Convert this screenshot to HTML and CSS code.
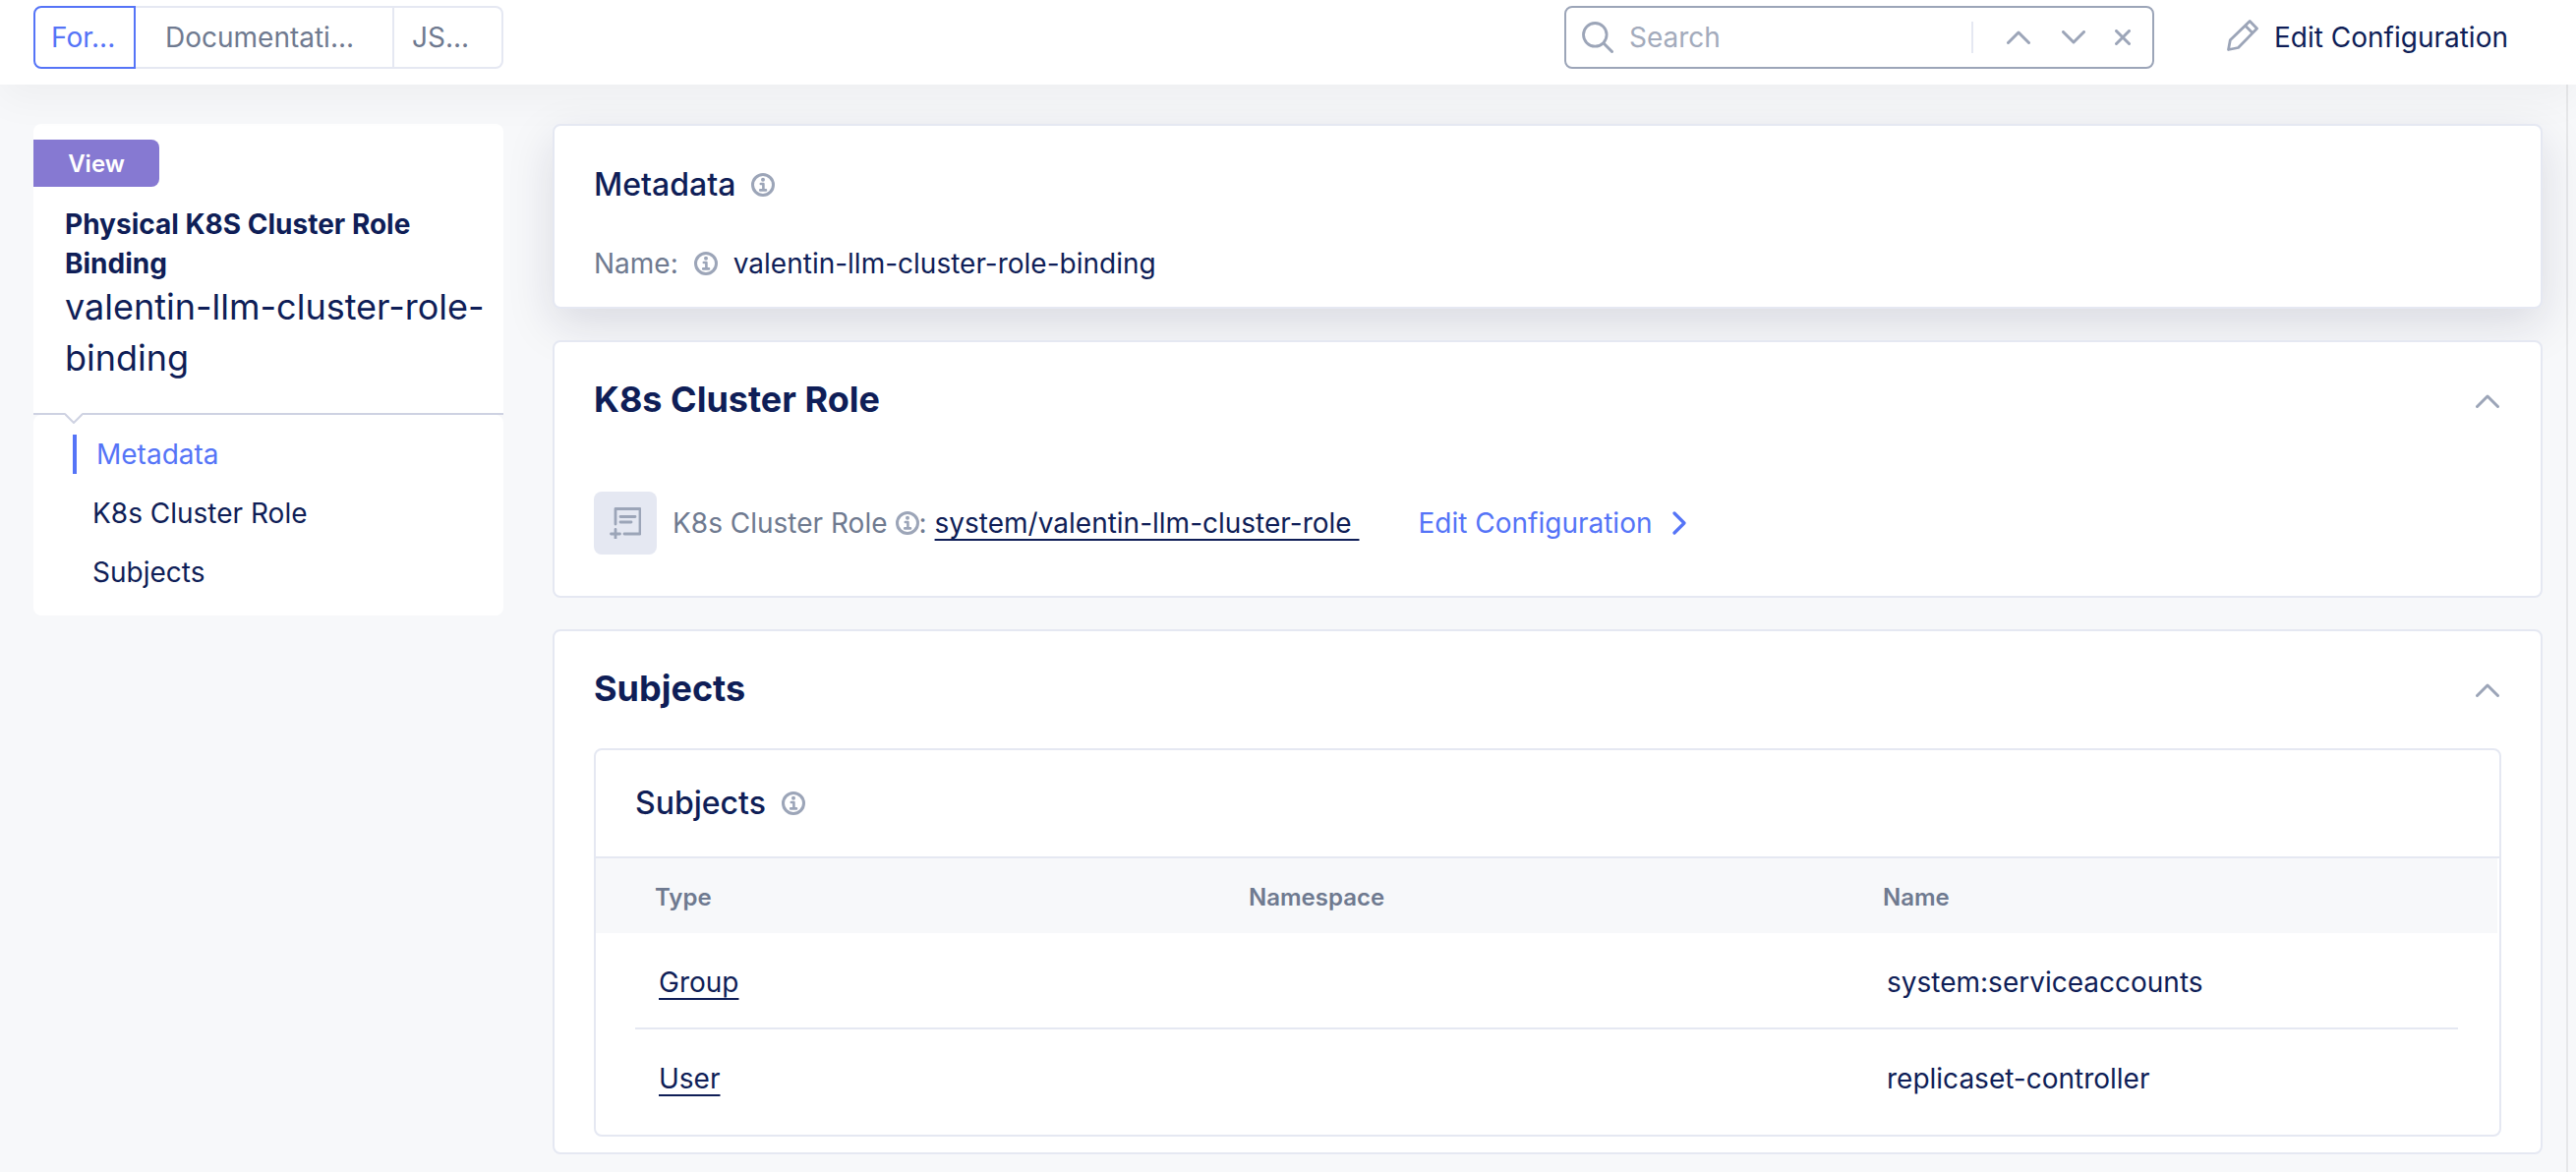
FILE: index.html
```html
<!DOCTYPE html>
<html lang="en">
<head>
<meta charset="utf-8">
<meta name="viewport" content="width=device-width, initial-scale=1">
<title>Physical K8S Cluster Role Binding</title>
<link rel="stylesheet" href="styles.css">
</head>
<body>
<svg class="defs" aria-hidden="true">
  <symbol id="info" viewBox="0 0 24 24">
    <circle cx="12" cy="12" r="10.5" fill="none" stroke="currentColor" stroke-width="3"/>
    <circle cx="12" cy="6.8" r="2" fill="currentColor"/>
    <path d="M9.8 11h2.6v6M9.2 17.4h5.8" fill="none" stroke="currentColor" stroke-width="2.6" stroke-linecap="round" stroke-linejoin="round"/>
  </symbol>
  <symbol id="up" viewBox="0 0 24 14">
    <path d="M1.5 12.5 12 2l10.5 10.5" fill="none" stroke="currentColor" stroke-width="3" stroke-linecap="round" stroke-linejoin="round"/>
  </symbol>
</svg>

<header class="topbar">
  <div class="tabs" role="tablist">
    <button class="tab tab-form active" role="tab" aria-selected="true">For...</button>
    <button class="tab tab-docs" role="tab" aria-selected="false">Documentati...</button>
    <button class="tab tab-json" role="tab" aria-selected="false">JS...</button>
  </div>
  <div class="actions">
    <div class="search">
      <svg class="search-icon" viewBox="0 0 32 32" aria-hidden="true"><circle cx="13.300" cy="13.300" r="11.800" fill="none" stroke="currentColor" stroke-width="2.800"/><path d="M22 22l8.500 8.500" stroke="currentColor" stroke-width="3" stroke-linecap="round"/></svg>
      <input class="search-input" type="search" placeholder="Search" aria-label="Search">
      <span class="divider"></span>
      <button class="icon-btn" aria-label="Previous match"><svg class="chev" aria-hidden="true"><use href="#up"/></svg></button>
      <button class="icon-btn" aria-label="Next match"><svg class="chev flip" aria-hidden="true"><use href="#up"/></svg></button>
      <button class="icon-btn close" aria-label="Clear search"><svg class="cross" viewBox="0 0 16 16" aria-hidden="true"><path d="M1.500 1.500l13 13M14.500 1.500l-13 13" stroke="currentColor" stroke-width="3" stroke-linecap="round"/></svg></button>
    </div>
    <button class="edit"><svg class="pencil" viewBox="0 0 32 32" aria-hidden="true"><path d="M1.500 30.500l1.800-9.800L23.200 1.500l7.300 7.500L11.500 28.500zM18.500 6l7.700 7.700" fill="none" stroke="currentColor" stroke-width="2.800" stroke-linejoin="round"/></svg>Edit Configuration</button>
  </div>
</header>

<div class="layout">
  <aside class="sidebar">
    <div class="summary">
      <span class="badge">View</span>
      <p class="kind">Physical K8S Cluster Role Binding</p>
      <p class="object-name">valentin-llm-cluster-role-binding</p>
    </div>
    <nav class="toc">
      <svg class="notch" viewBox="0 0 18 11" aria-hidden="true"><path d="M0 0h18L9 9z" fill="#fff"/><path d="M0 1l9 9 9-9" fill="none" stroke="#ced2e2" stroke-width="2"/></svg>
      <a class="toc-link current" href="#metadata">Metadata</a>
      <a class="toc-link" href="#role">K8s Cluster Role</a>
      <a class="toc-link" href="#subjects">Subjects</a>
    </nav>
  </aside>

  <main class="content">
    <section class="card raised" id="metadata">
      <h2 class="subtitle">Metadata <svg class="info" aria-hidden="true"><use href="#info"/></svg></h2>
      <p class="field"><span class="label">Name:</span> <svg class="info" aria-hidden="true"><use href="#info"/></svg> <span>valentin-llm-cluster-role-binding</span></p>
    </section>

    <section class="card" id="role">
      <div class="card-head">
        <h2 class="title">K8s Cluster Role</h2>
        <button class="icon-btn" aria-label="Collapse K8s Cluster Role"><svg class="chev" aria-hidden="true"><use href="#up"/></svg></button>
      </div>
      <div class="ref">
        <span class="tile"><svg class="tile-icon" viewBox="0 0 32 32" aria-hidden="true"><path d="M6 17V1.500h25V27H15M11 9.500h15M11 15h11M6 22.500v9M1.500 27h9" fill="none" stroke="currentColor" stroke-width="2.800" stroke-linecap="round" stroke-linejoin="round"/></svg></span>
        <span class="label ref-label">K8s Cluster Role <svg class="info" aria-hidden="true"><use href="#info"/></svg>:</span>
        <a class="link" href="#role">system/valentin-llm-cluster-role&nbsp;</a>
        <a class="edit-link" href="#edit">Edit Configuration <svg class="arrow" viewBox="0 0 14 24" aria-hidden="true"><path d="M2 2l10 10L2 22" fill="none" stroke="currentColor" stroke-width="3.200" stroke-linecap="round" stroke-linejoin="round"/></svg></a>
      </div>
    </section>

    <section class="card" id="subjects">
      <div class="card-head">
        <h2 class="title">Subjects</h2>
        <button class="icon-btn" aria-label="Collapse Subjects"><svg class="chev" aria-hidden="true"><use href="#up"/></svg></button>
      </div>
      <div class="panel">
        <h3 class="subtitle panel-title">Subjects <svg class="info" aria-hidden="true"><use href="#info"/></svg></h3>
        <div class="table-wrap">
          <table class="table">
            <thead><tr><th class="edge"></th><th class="c-type">Type</th><th class="c-ns">Namespace</th><th>Name</th><th class="edge"></th></tr></thead>
            <tbody>
              <tr><td class="edge"></td><td><a class="link" href="#group">Group</a></td><td></td><td>system:serviceaccounts</td><td class="edge"></td></tr>
              <tr><td class="edge"></td><td><a class="link" href="#user">User</a></td><td></td><td>replicaset-controller</td><td class="edge"></td></tr>
            </tbody>
          </table>
        </div>
      </div>
    </section>
  </main>
</div>
</body>
</html>
```

FILE: styles.css
```css
* { box-sizing: border-box; }

body {
  margin: 0;
  min-height: 100vh;
  display: flex;
  flex-direction: column;
  background: #f7f8fa;
  color: #0f1e57;
  font: 400 28px/40px Inter, "Liberation Sans", sans-serif;
}

h2, h3, p { margin: 0; }
button, input { font: inherit; color: inherit; background: none; border: 0; padding: 0; margin: 0; }
button { cursor: pointer; }
a { color: inherit; text-decoration: none; }
svg { flex: none; display: block; }
.defs { position: absolute; width: 0; height: 0; }

/* Top bar */
.topbar {
  position: relative;
  display: flex;
  justify-content: space-between;
  align-items: flex-start;
  padding: 6px 69px 16px 34px;
  background: #fff;
  box-shadow: 0 16px 40px rgba(0, 0, 0, 0.04);
}

.tabs { display: flex; width: 478px; height: 64px; }
.tab {
  border: 2px solid #e5e8f2;
  border-left-width: 0;
  color: #6f7a90;
  text-align: left;
}
.tab-form { width: 104px; padding-left: 16px; border-radius: 8px 0 0 8px; }
.tab-docs { width: 263px; padding-left: 30px; }
.tab-json { flex: 1; padding-left: 18px; border-radius: 0 8px 8px 0; }
.tab.active { border: 2px solid #5574f7; color: #5574f7; }

.actions { display: flex; align-items: center; gap: 74px; }
.search {
  display: flex;
  align-items: center;
  width: 600px;
  height: 64px;
  padding: 0 22px 0 16px;
  border: 2px solid #9ca5b8;
  border-radius: 8px;
  color: #9ca5b8;
}
.search-icon { width: 32px; height: 32px; }
.search-input { flex: 1; min-width: 0; margin-left: 16px; outline: none; }
.search-input::placeholder { color: #a3abbc; opacity: 1; }
.divider { width: 2px; height: 32px; margin-right: 34px; background: #e5e8f2; }
.icon-btn { display: flex; color: #9ca5b8; }
.icon-btn + .icon-btn { margin-left: 32px; }
.icon-btn + .close { margin-left: 30px; }
.chev { width: 24px; height: 14px; }
.flip { transform: rotate(180deg); }
.cross { width: 16px; height: 16px; }
.edit { display: flex; align-items: center; gap: 16px; }
.pencil { width: 32px; height: 32px; margin-bottom: 4px; color: #9ca5b8; }

/* Page body */
.layout {
  flex: 1;
  display: flex;
  align-items: flex-start;
  gap: 50px;
  margin-right: 8px;
  padding: 40px 24px 16px 34px;
  border-right: 2px solid #e6e7e9;
}

.sidebar { width: 478px; flex: none; }
.summary {
  padding: 16px 16px 30px 32px;
  background: #fff;
  border-bottom: 2px solid #ced2e2;
  border-radius: 8px 8px 0 0;
}
.badge {
  display: block;
  width: 128px;
  margin: 0 0 18px -32px;
  padding-top: 2px;
  border-radius: 0 8px 8px 0;
  background: #8679d2;
  color: #fff;
  font-size: 24px;
  font-weight: 600;
  line-height: 46px;
  text-align: center;
}
.kind { font-weight: 700; }
.object-name { margin-top: -2px; font-size: 36px; line-height: 52px; }

.toc {
  position: relative;
  display: flex;
  flex-direction: column;
  gap: 20px;
  padding: 20px 40px 24px;
  background: #fff;
  border-radius: 8px;
}
.notch { position: absolute; top: -2px; left: 32px; width: 18px; height: 11px; }
.toc-link { padding-left: 20px; }
.current { color: #5574f7; border-left: 4px solid #5574f7; }

.content { flex: 1; min-width: 0; display: flex; flex-direction: column; gap: 32px; }
.card {
  position: relative;
  padding: 40px 40px 42px;
  background: #fff;
  border: 2px solid #e5e8f2;
  border-radius: 8px;
}
.raised { box-shadow: 0 16px 48px rgba(20, 24, 60, 0.13); padding: 40px 40px 24px; }

.subtitle { display: flex; align-items: center; gap: 16px; font-size: 32px; font-weight: 500; line-height: 40px; }
.info { width: 24px; height: 24px; color: #9ca5b8; }
.field { display: flex; align-items: center; gap: 16px; margin-top: 40px; }
.label { color: #6f7a90; }

.card-head { display: flex; justify-content: space-between; align-items: center; height: 40px; padding-right: 2px; }
.title { align-self: flex-start; font-size: 36px; font-weight: 700; line-height: 36px; }

.ref { display: flex; align-items: center; margin-top: 72px; }
.tile { display: flex; align-items: center; justify-content: center; width: 64px; height: 64px; border-radius: 8px; background: #e5e8f2; color: #9ca5b8; }
.tile-icon { width: 32px; height: 32px; }
.ref-label { display: flex; align-items: center; margin: 0 8px 0 16px; }
.ref-label .info { margin-left: 8px; }
.link { text-decoration: underline; text-decoration-thickness: 2px; text-underline-offset: 6px; }
.edit-link { display: flex; align-items: center; gap: 20px; margin-left: 60px; color: #5574f7; }
.arrow { width: 14px; height: 24px; }

#subjects { padding-bottom: 16px; }
.panel { margin-top: 39px; padding-bottom: 11px; border: 2px solid #e5e8f2; border-radius: 8px; }
.panel-title { padding: 34px 40px; border-bottom: 2px solid #e5e8f2; }

.table-wrap { padding-right: 2px; }
.table { width: 100%; border-collapse: collapse; table-layout: fixed; text-align: left; }
.table th { height: 76px; padding: 4px 20px 0; background: #f7f8fa; color: #6f7a90; font-size: 24px; font-weight: 600; }
.table td { height: 97px; padding: 4px 24px 0; }
.table .edge { width: 40px; padding: 0; }
.c-type { width: 604px; }
.c-ns { width: 645px; }
.table tbody tr:first-child td:not(.edge) { border-bottom: 2px solid #e5e8f2; }
```
